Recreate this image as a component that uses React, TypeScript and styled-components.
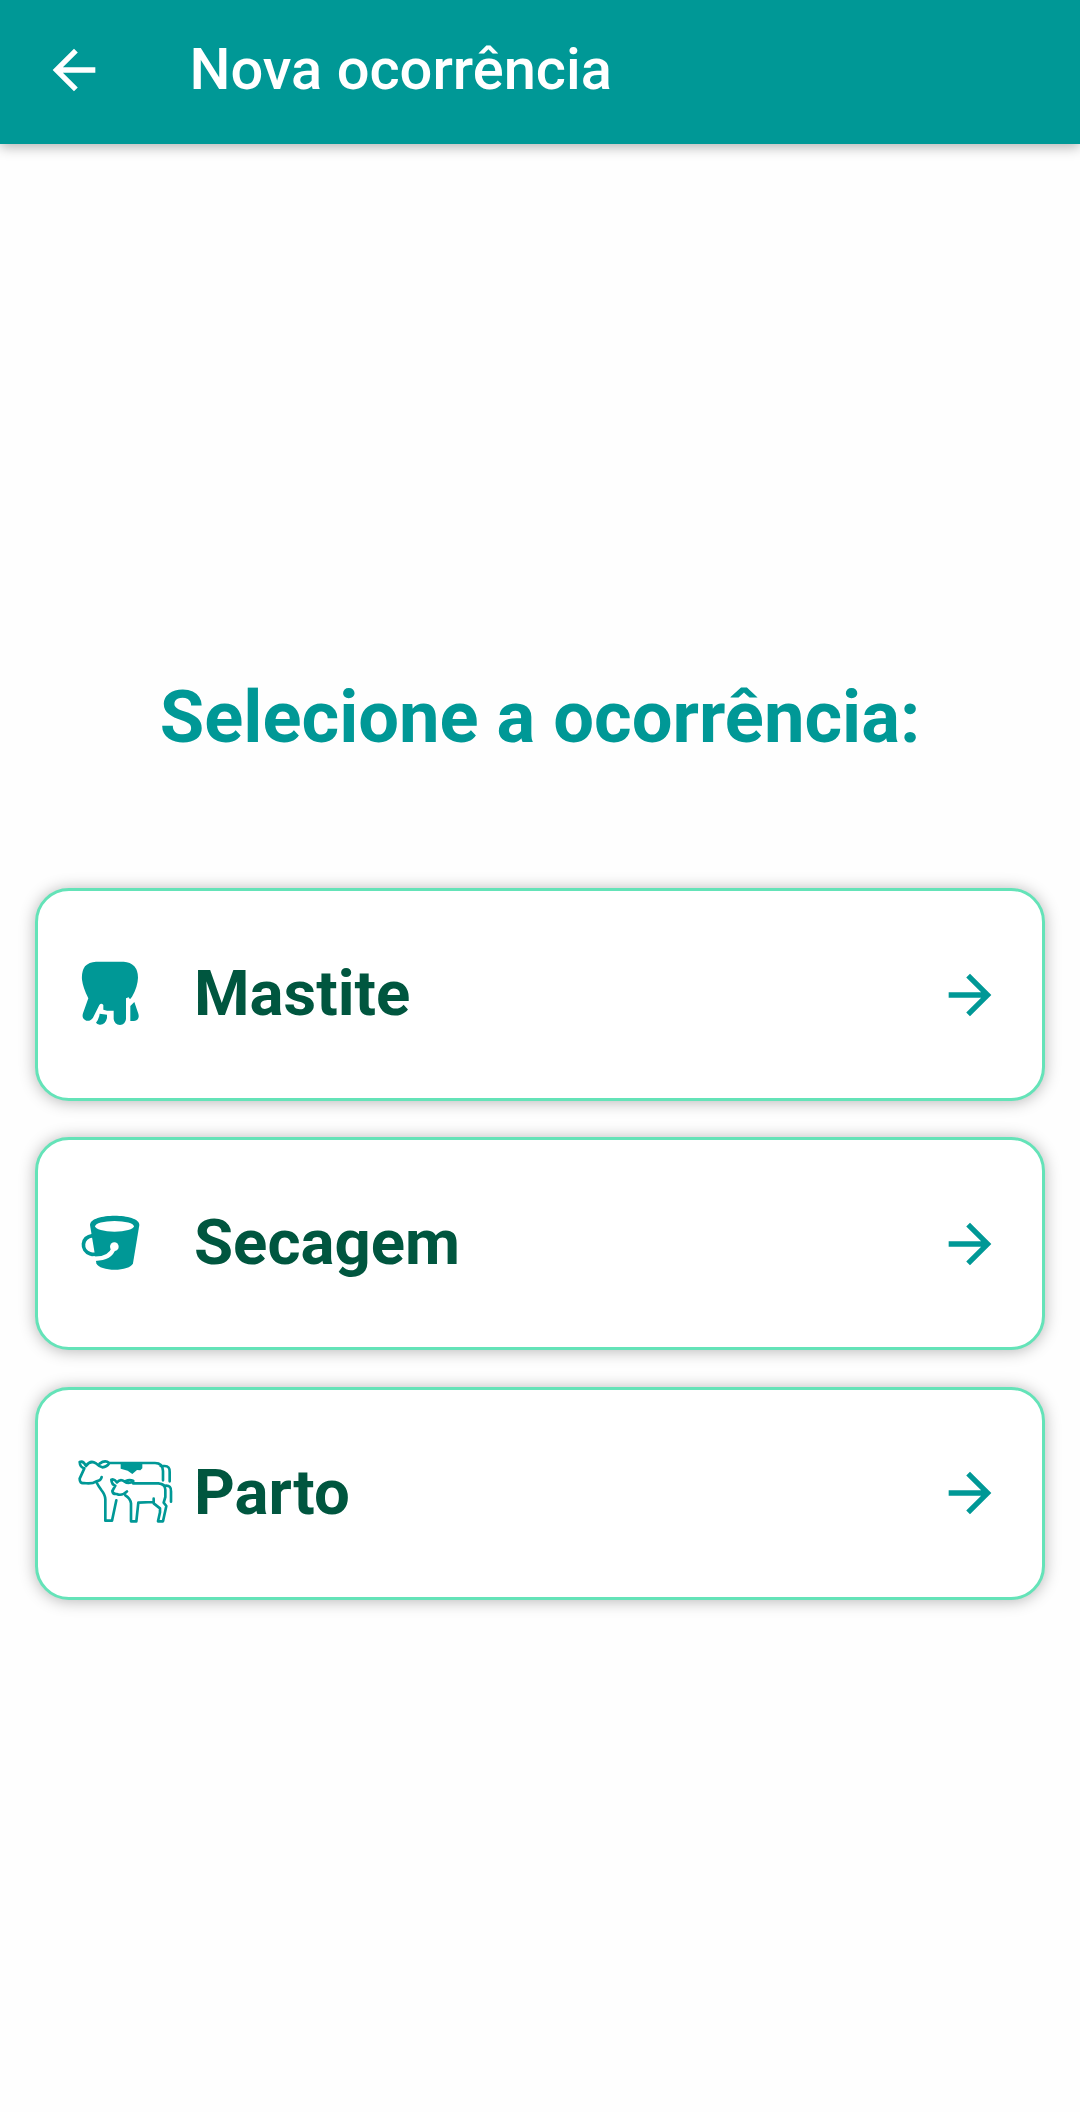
import React from 'react';
import styled, { createGlobalStyle } from 'styled-components';

const Global = createGlobalStyle`
  * { box-sizing: border-box; }
  body { margin: 0; background: #fefefe; font-family: Roboto, "Liberation Sans", sans-serif; }
`;

const Screen = styled.div`
  display: flex;
  flex-direction: column;
  height: 2112px;
  overflow: hidden;
`;

const Header = styled.header`
  display: flex;
  align-items: center;
  height: 144px;
  flex: none;
  padding: 0 41.5px 4px;
  background: #009896;
  box-shadow: 0 3px 12px rgba(0, 0, 0, 0.3);
`;

const BackButton = styled.button`
  display: flex;
  border: 0;
  padding: 0;
  width: 148px;
  background: none;
  color: #fff;
`;

const Title = styled.h1`
  margin: 0;
  padding-bottom: 2px;
  font-size: 57.8px;
  line-height: 66px;
  font-weight: 500;
  color: #fff;
`;

const Main = styled.main`
  display: flex;
  flex-direction: column;
  align-items: stretch;
  padding: 525px 35px 0;
`;

const Heading = styled.h2`
  margin: 0 0 122px;
  text-align: center;
  font-size: 72.3px;
  line-height: 97px;
  font-weight: 700;
  white-space: nowrap;
  color: #009896;
`;

const Options = styled.div`
  display: flex;
  flex-direction: column;
  gap: 36.4px;
`;

const Option = styled.button`
  display: flex;
  align-items: center;
  height: 213px;
  padding: 0 40.5px 0 32px;
  border: 3px solid #64e3b8;
  border-radius: 34px;
  background: #fff;
  box-shadow: 0 1px 16px rgba(0, 0, 0, 0.29);
  font-family: inherit;
  color: #009896;
`;

const IconSlot = styled.span`
  display: flex;
  width: 124px;
  flex: none;
  padding-bottom: 8px;
`;

const Label = styled.span`
  flex: 1;
  padding-bottom: 1.5px;
  text-align: left;
  font-size: 63.5px;
  line-height: 74px;
  font-weight: 700;
  color: #00563f;
`;

const Arrow = ({ back = false }: { back?: boolean }) => (
  <svg width="64" height="64" viewBox="0 0 24 24" fill="currentColor">
    {back ? (
      <path d="M20 11H7.83l5.59-5.59L12 4l-8 8 8 8 1.41-1.41L7.83 13H20v-2z" />
    ) : (
      <path d="M12 4l-1.41 1.41L16.17 11H4v2h12.17l-5.58 5.59L12 20l8-8z" />
    )}
  </svg>
);

const UdderIcon = () => (
  <svg width="80" height="90" viewBox="0 1 240 270" fill="currentColor">
    <path d="M78 48H161Q181 49 193 62Q204 75 204 96Q203 124 186 153L180 161L176 155L168 158V220Q166 237 150 238Q133 237 131 220V195Q116 197 100 192V178Q94 170 88 178L69 216Q62 227 49 225Q34 219 39 203L55 158Q39 126 36 102Q34 78 45 62Q57 49 78 48Z" />
    <path d="M89 204L111 207V217Q106 238 89 237Q81 235 78 231Q87 220 89 204ZM181 181L193 169L205 204Q210 223 192 226H181Z" />
  </svg>
);

const BucketIcon = () => (
  <svg width="80" height="80" viewBox="0 0 240 240">
    <path
      fill="currentColor"
      d="M60 75C60 38 208 38 208 75L189 190C180 216 88 216 79 190Z"
    />
    <ellipse cx="133.500" cy="79" rx="58" ry="16" fill="#fff" />
    <path d="M68 107C33 112 32 151 60 161Q68 164 80 163" fill="none" stroke="currentColor" strokeWidth="11" />
    <path d="M68 176Q120 179 132 143" fill="none" stroke="#fff" strokeWidth="13" />
    <circle cx="133" cy="140" r="13" fill="#fff" />
  </svg>
);

const CowsIcon = () => (
  <svg width="110" height="80" viewBox="0 -1 330 240" fill="none" stroke="currentColor" strokeWidth="8" strokeLinejoin="round" strokeLinecap="round">
    <path d="M48 50Q40 33 29 38Q30 54 43 57L29 88Q29 103 41 101Q66 105 79 96Q93 94 95 83M48 50Q61 31 78 42Q87 51 97 54Q111 53 118 41Q105 31 89 43M118 41H255Q278 41 279 65V93M272 50H284Q300 50 299 68V96M79 98Q85 110 94 122Q106 137 106 150V214H126L139 153" />
    <path d="M152 42H217V57L211 63L201 62L187 74L173 64L152 58Z" fill="currentColor" stroke="none" />
    <path d="M141 99Q132 87 124 91Q125 106 136 109L127 125Q128 135 140 134Q156 141 171 126M141 99Q151 87 163 96Q176 106 190 95Q179 89 168 95M189 102H265Q286 103 286 121V143L281 160L289 170L279 216H264L270 189V177L251 162V148M287 109Q304 108 303 126V157M166 138Q181 147 183 162V216H199L205 160L249 158" />
  </svg>
);

const items = [
  { label: 'Mastite', Icon: UdderIcon },
  { label: 'Secagem', Icon: BucketIcon },
  { label: 'Parto', Icon: CowsIcon },
];

export default function App() {
  return (
    <Screen>
      <Global />
      <Header>
        <BackButton aria-label="Voltar"><Arrow back /></BackButton>
        <Title>Nova ocorrência</Title>
      </Header>
      <Main>
        <Heading>Selecione a ocorrência:</Heading>
        <Options>
          {items.map(({ label, Icon }) => (
            <Option key={label}>
              <IconSlot><Icon /></IconSlot>
              <Label>{label}</Label>
              <Arrow />
            </Option>
          ))}
        </Options>
      </Main>
    </Screen>
  );
}
